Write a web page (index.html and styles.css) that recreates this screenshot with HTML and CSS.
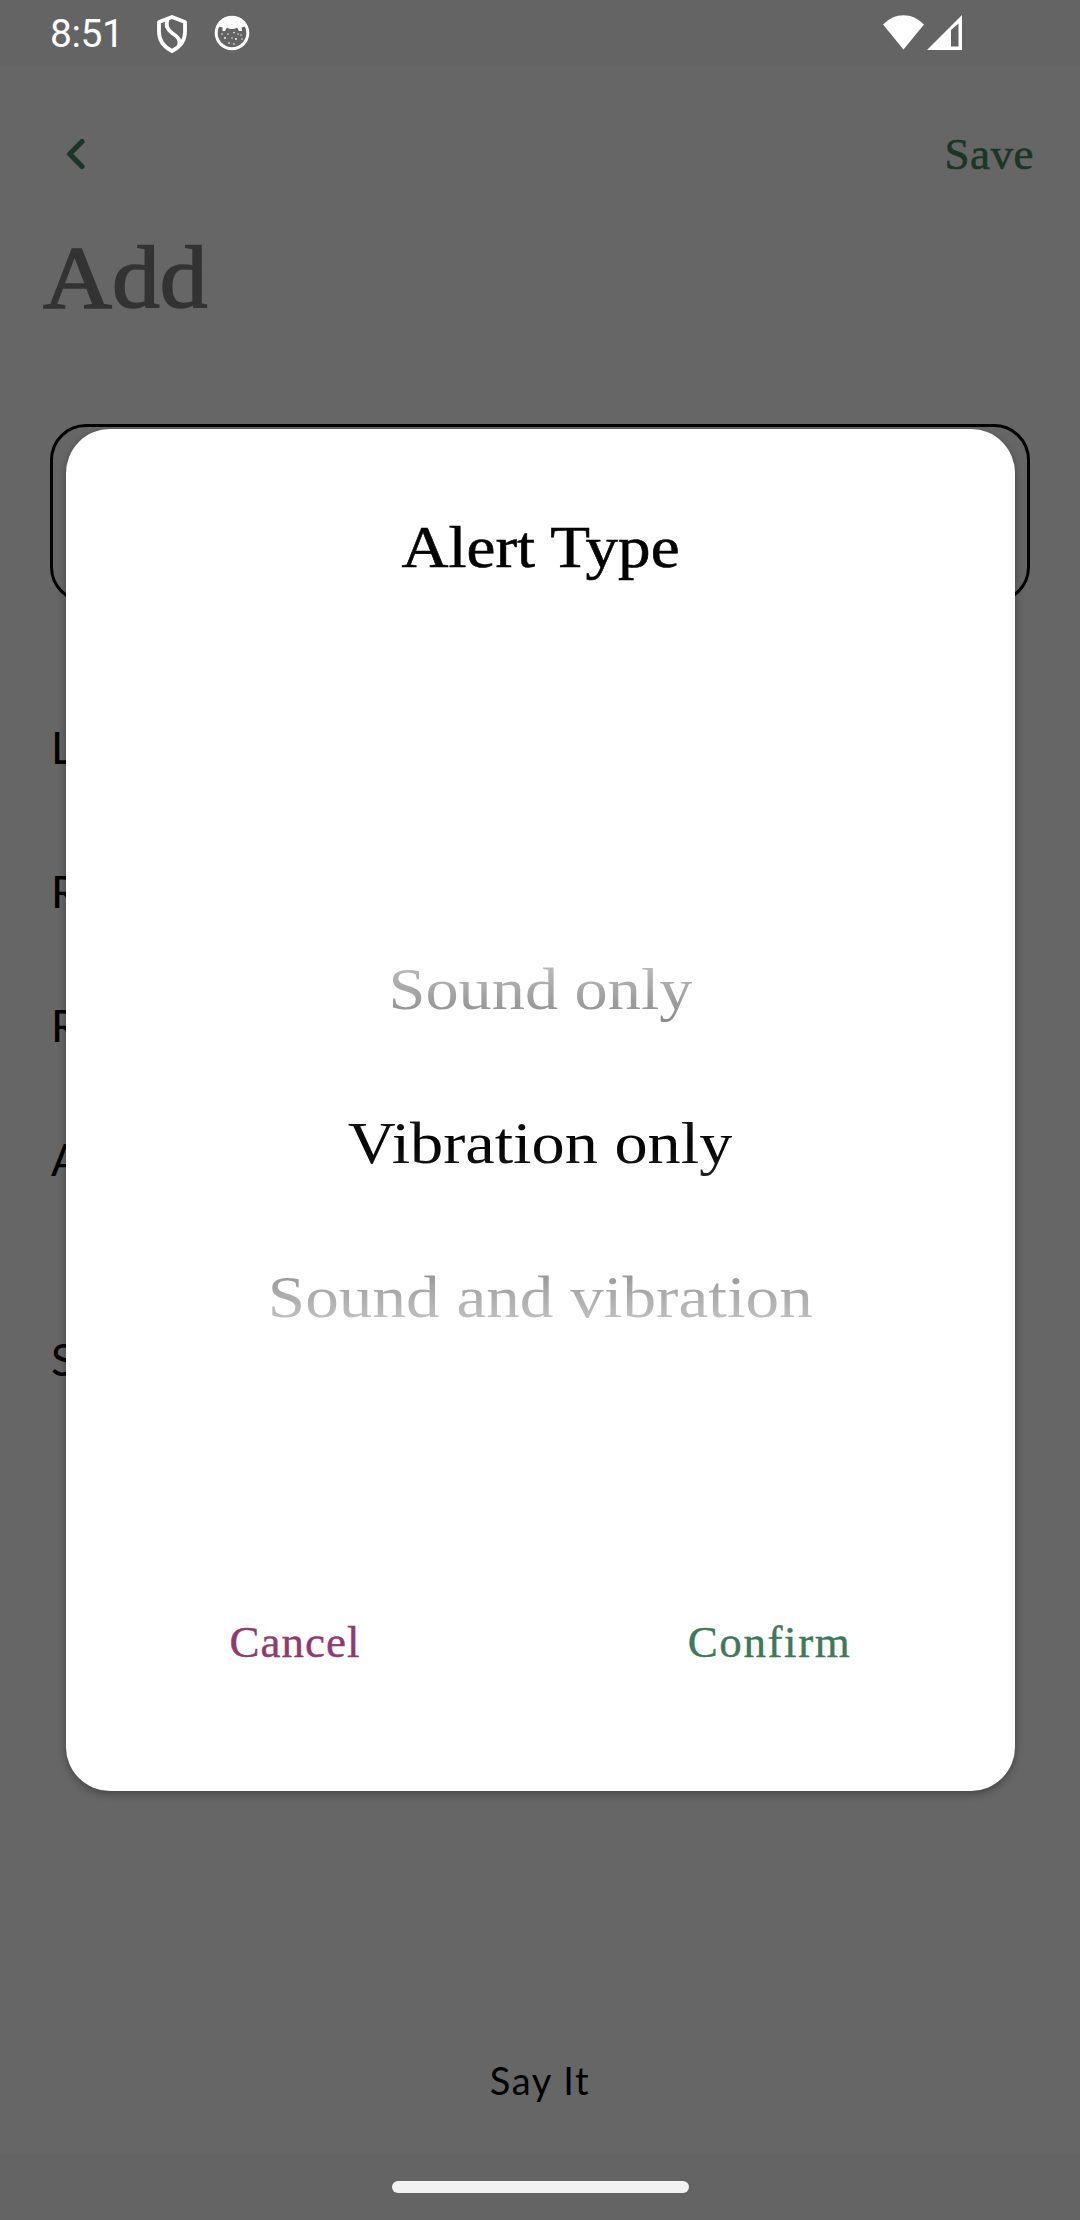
FILE: index.html
```html
<!DOCTYPE html>
<html lang="en">
<head>
<meta charset="utf-8">
<title>Add</title>
<link rel="stylesheet" href="styles.css">
</head>
<body>
<div class="screen">
  <header class="status">
    <span class="clock">8:51</span>
    <svg class="shield" viewBox="0 0 32 38" fill="none" stroke="#fff" stroke-width="3.8" stroke-linejoin="round"><path d="M16 2 L29 7 V17 C29 26 24 32 16 36 C8 32 3 26 3 17 V7 Z"/><path d="M11.5 4 C9.5 11 11 14 16 18 C22 22 25 25 23 31"/></svg>
    <svg class="cat" viewBox="0 0 36 36"><circle cx="18" cy="18" r="15.8" fill="none" stroke="#fff" stroke-width="3"/><path d="M3 11 C9 -1 27 -1 33 11 L27.5 12.5 L28 16 L25 16 L23 12.5 C20 14.5 16 14.5 13 12.5 L11 16 L8.5 16 L8.5 12.5 Z" fill="#fff"/><g fill="#fff"><circle cx="8" cy="19" r=".7"/><circle cx="14" cy="19" r=".7"/><circle cx="20" cy="17.5" r=".8"/><circle cx="27" cy="20" r=".7"/><circle cx="11" cy="23" r=".9"/><circle cx="18" cy="23" r=".7"/><circle cx="22" cy="24" r=".9"/><circle cx="28" cy="24" r=".7"/><circle cx="15" cy="28" r=".8"/><circle cx="20" cy="29" r=".8"/><circle cx="24" cy="19" r=".7"/></g></svg>
    <svg class="wifi" viewBox="0 0 41 35"><path d="M0 9.5 C12 -3 29 -3 41 9.5 L20.5 34.5 Z" fill="#fff"/></svg>
    <svg class="signal" viewBox="0 0 35 35"><path d="M35 0 V35 H0 Z M24 15 V31.5 H31.5 V8.5 Z" fill="#fff" fill-rule="evenodd"/></svg>
  </header>

  <main class="page">
    <nav class="toolbar">
      <svg class="back" viewBox="0 0 20 32" fill="none" stroke="#1b3527" stroke-width="5.2" stroke-linecap="round" stroke-linejoin="round"><path d="M16 3.5 L3.7 16 L16 28.5"/></svg>
      <span class="save">Save</span>
    </nav>
    <h1 class="heading">Add</h1>
    <div class="field"></div>
    <div class="rows">
      <div class="row row-l">L</div>
      <div class="row row-r">R</div>
      <div class="row">R</div>
      <div class="row row-a">A</div>
      <div class="row">S</div>
    </div>
    <div class="say">Say It</div>
  </main>

  <footer class="navbar"><div class="pill"></div></footer>

  <section class="dialog">
    <h2 class="title">Alert Type</h2>
    <div class="picker">
      <div class="option above"><span>Sound only</span></div>
      <div class="option chosen"><span>Vibration only</span></div>
      <div class="option below"><span>Sound and vibration</span></div>
    </div>
    <div class="actions">
      <span class="cancel">Cancel</span>
      <span class="confirm">Confirm</span>
    </div>
  </section>
</div>
</body>
</html>
```
FILE: styles.css
```css
* { box-sizing: border-box; }
body { margin: 0; font-family: "Liberation Serif", serif; }
.screen {
  position: relative;
  display: flex;
  flex-direction: column;
  width: 1080px;
  height: 2220px;
  background: #666;
  overflow: hidden;
}

.status {
  display: flex;
  align-items: flex-start;
  height: 66px;
  padding: 15px 118px 0 50px;
  background: #646464;
}
.clock {
  width: 106px;
  font: 39px/39px Roboto, sans-serif;
  letter-spacing: -0.4px;
  color: #fff;
}
.shield { width: 32px; height: 38px; }
.cat { width: 36px; height: 36px; margin: 0 0 0 26px; }
.wifi { width: 41px; height: 35px; margin-left: auto; }
.signal { width: 35px; height: 35px; margin-left: 3px; }

.page { display: flex; flex-direction: column; flex: 1; }
.toolbar {
  display: flex;
  justify-content: space-between;
  align-items: center;
  height: 60px;
  margin-top: 58px;
  padding: 0 46px 0 66px;
}
.back { width: 20px; height: 32px; }
.save {
  font-size: 45px;
  line-height: 60px;
  letter-spacing: 0.5px;
  color: #1b3527;
  -webkit-text-stroke: 0.6px #1b3527;
}
.heading {
  margin: 44px 0 0 43px;
  font-size: 88px;
  font-weight: 400;
  line-height: 100px;
  transform: scaleX(1.085);
  transform-origin: left;
  color: #333;
  -webkit-text-stroke: 1.6px #333;
}
.field {
  height: 179px;
  margin: 96px 50px 0;
  border: 3px solid #000;
  border-radius: 36px;
}
.rows {
  padding: 114px 0 0 51px;
  font-family: Lato, sans-serif;
  font-size: 44px;
  line-height: 60px;
}
.row { height: 60px; margin-bottom: 74px; }
.row-l { margin-bottom: 84px; }
.row-a { margin-bottom: 140px; }
.say {
  margin-top: auto;
  margin-bottom: 44px;
  font: 38px/60px Lato, sans-serif;
  letter-spacing: 1.6px;
  text-align: center;
}

.navbar {
  display: flex;
  justify-content: center;
  height: 66px;
  padding-top: 27px;
  background: #646464;
}
.pill { width: 297px; height: 12px; border-radius: 6px; background: #f2f2f2; }

.dialog {
  position: absolute;
  left: 66px;
  top: 429px;
  width: 949px;
  height: 1362px;
  padding-top: 78px;
  border-radius: 44px;
  background: #fff;
  box-shadow: 0 3px 8px rgba(0, 0, 0, 0.32);
}
.title {
  margin: 0;
  font-size: 60px;
  font-weight: 400;
  line-height: 80px;
  transform: scaleX(1.085);
  text-align: center;
  -webkit-text-stroke: 0.6px #000;
}
.picker { margin-top: 325px; }
.option {
  height: 154px;
  font-size: 60px;
  line-height: 154px;
  text-align: center;
}
.option span {
  display: inline-block;
  height: 154px;
  color: transparent;
  background-clip: text;
  -webkit-background-clip: text;
}
.above span { transform: scaleX(1.105); background-image: linear-gradient(#bebebe 50px, #969696 98px, #858585 112px); }
.chosen span { transform: scaleX(1.105); background-image: linear-gradient(#1c1c1c 50px, #000 76px, #141414 98px, #282828 112px); }
.below span { transform: scaleX(1.12); background-image: linear-gradient(#959595 50px, #acacac 75px, #bebebe 98px); }
.actions {
  display: flex;
  justify-content: space-around;
  margin-top: 238px;
  font-size: 45px;
  line-height: 60px;
}
.cancel { color: #8d3b6f; letter-spacing: 1px; -webkit-text-stroke: 0.4px #8d3b6f; }
.confirm { color: #40785a; letter-spacing: 1.6px; -webkit-text-stroke: 0.4px #40785a; }
```
